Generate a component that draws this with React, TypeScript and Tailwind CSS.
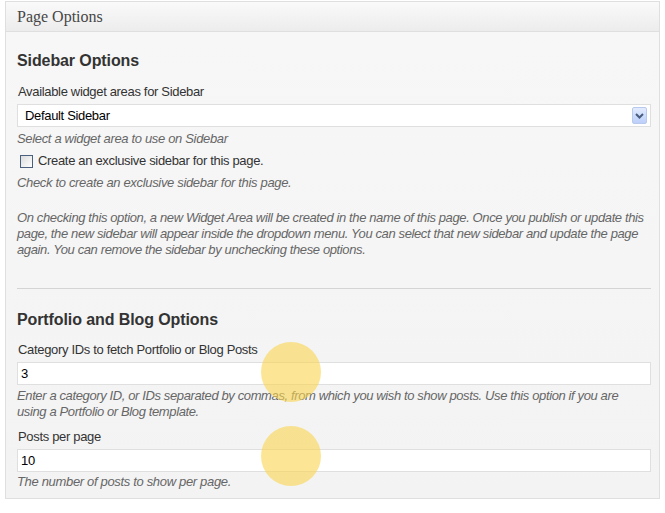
import React from "react";

function Chevron() {
  return (
    <svg width="9" height="6" viewBox="0 0 9 6">
      <path d="M1 1 L4.5 4.5 L8 1" stroke="#4a5d80" strokeWidth="2" fill="none" />
    </svg>
  );
}

export default function App() {
  const sans = { fontFamily: '"Liberation Sans", Arial, sans-serif' };
  return (
    <div className="w-[665px] h-[513px] bg-white pt-[1px] pl-[5px]" style={sans}>
      <div className="relative w-[655px] border border-[#dfdfdf] bg-[#f5f5f5]">
        <div
          className="h-[30px] border-b border-[#dfdfdf] bg-gradient-to-b from-[#fafafa] to-[#ececec] pl-[11px] flex items-center text-[16px] text-[#464646]"
          style={{ fontFamily: '"Liberation Serif", Georgia, serif' }}
        >
          Page Options
        </div>
        <div className="pl-[11px] pr-[8px] pt-[19px] pb-[8px] bg-gradient-to-b from-[#f7f7f7] to-[#f3f3f3] tracking-[-0.33px]">
          <h3 className="text-[16px] leading-[20px] font-bold text-[#333] tracking-[-0.1px]">Sidebar Options</h3>
          <div className="mt-[13px] text-[13px] leading-[16px] text-[#333] pl-[1px]">
            Available widget areas for Sidebar
          </div>
          <div className="mt-[4px] h-[23px] bg-white border border-[#dfdfdf] flex items-center justify-between pl-[7px] pr-[3px] text-[13px] text-black">
            <span>Default Sidebar</span>
            <div className="w-[15px] h-[17px] rounded-[2px] border border-[#b9c9ee] bg-gradient-to-b from-[#e3ebfd] to-[#bccffa] flex items-center justify-center">
              <Chevron />
            </div>
          </div>
          <div className="mt-[4px] text-[13px] leading-[16px] italic text-[#666]">
            Select a widget area to use on Sidebar
          </div>
          <div className="mt-[6px] flex items-center h-[16px] text-[13px] text-[#333] pl-[3px]">
            <span className="w-[13px] h-[13px] border border-[#4b5f7f] bg-gradient-to-br from-[#dcdcdc] to-white mr-[5px]" />
            Create an exclusive sidebar for this page.
          </div>
          <div className="mt-[6px] text-[13px] leading-[16px] italic text-[#666]">
            Check to create an exclusive sidebar for this page.
          </div>
          <p className="mt-[19px] text-[13px] leading-[16px] italic text-[#666] tracking-[-0.38px]">
            On checking this option, a new Widget Area will be created in the name of this page. Once you publish or update this page, the new sidebar will appear inside the dropdown menu. You can select that new sidebar and update the page again. You can remove the sidebar by unchecking these options.
          </p>
          <div className="mt-[30px] h-[2px] border-t border-[#d4d4d4] border-b-white" />
          <h3 className="mt-[20px] text-[16px] leading-[20px] font-bold text-[#333] tracking-[-0.1px]">Portfolio and Blog Options</h3>
          <div className="mt-[12px] text-[13px] leading-[16px] text-[#333] pl-[1px]">
            Category IDs to fetch Portfolio or Blog Posts
          </div>
          <div className="mt-[4px] h-[23px] bg-white border border-[#dfdfdf] flex items-center pl-[3px] text-[13px] text-black">
            3
          </div>
          <p className="mt-[3px] text-[13px] leading-[16px] italic text-[#666] tracking-[-0.38px] pr-[18px]">
            Enter a category ID, or IDs separated by commas, from which you wish to show posts. Use this option if you are using a Portfolio or Blog template.
          </p>
          <div className="mt-[9px] text-[13px] leading-[16px] text-[#333] pl-[1px]">Posts per page</div>
          <div className="mt-[4px] h-[23px] bg-white border border-[#dfdfdf] flex items-center pl-[3px] text-[13px] text-black">
            10
          </div>
          <div className="mt-[2px] text-[13px] leading-[16px] italic text-[#666]">
            The number of posts to show per page.
          </div>
        </div>
        <div className="absolute left-[255px] top-[340px] w-[60px] h-[60px] rounded-full bg-[rgba(250,214,80,0.6)]" />
        <div className="absolute left-[255px] top-[424px] w-[60px] h-[60px] rounded-full bg-[rgba(250,214,80,0.6)]" />
      </div>
    </div>
  );
}
